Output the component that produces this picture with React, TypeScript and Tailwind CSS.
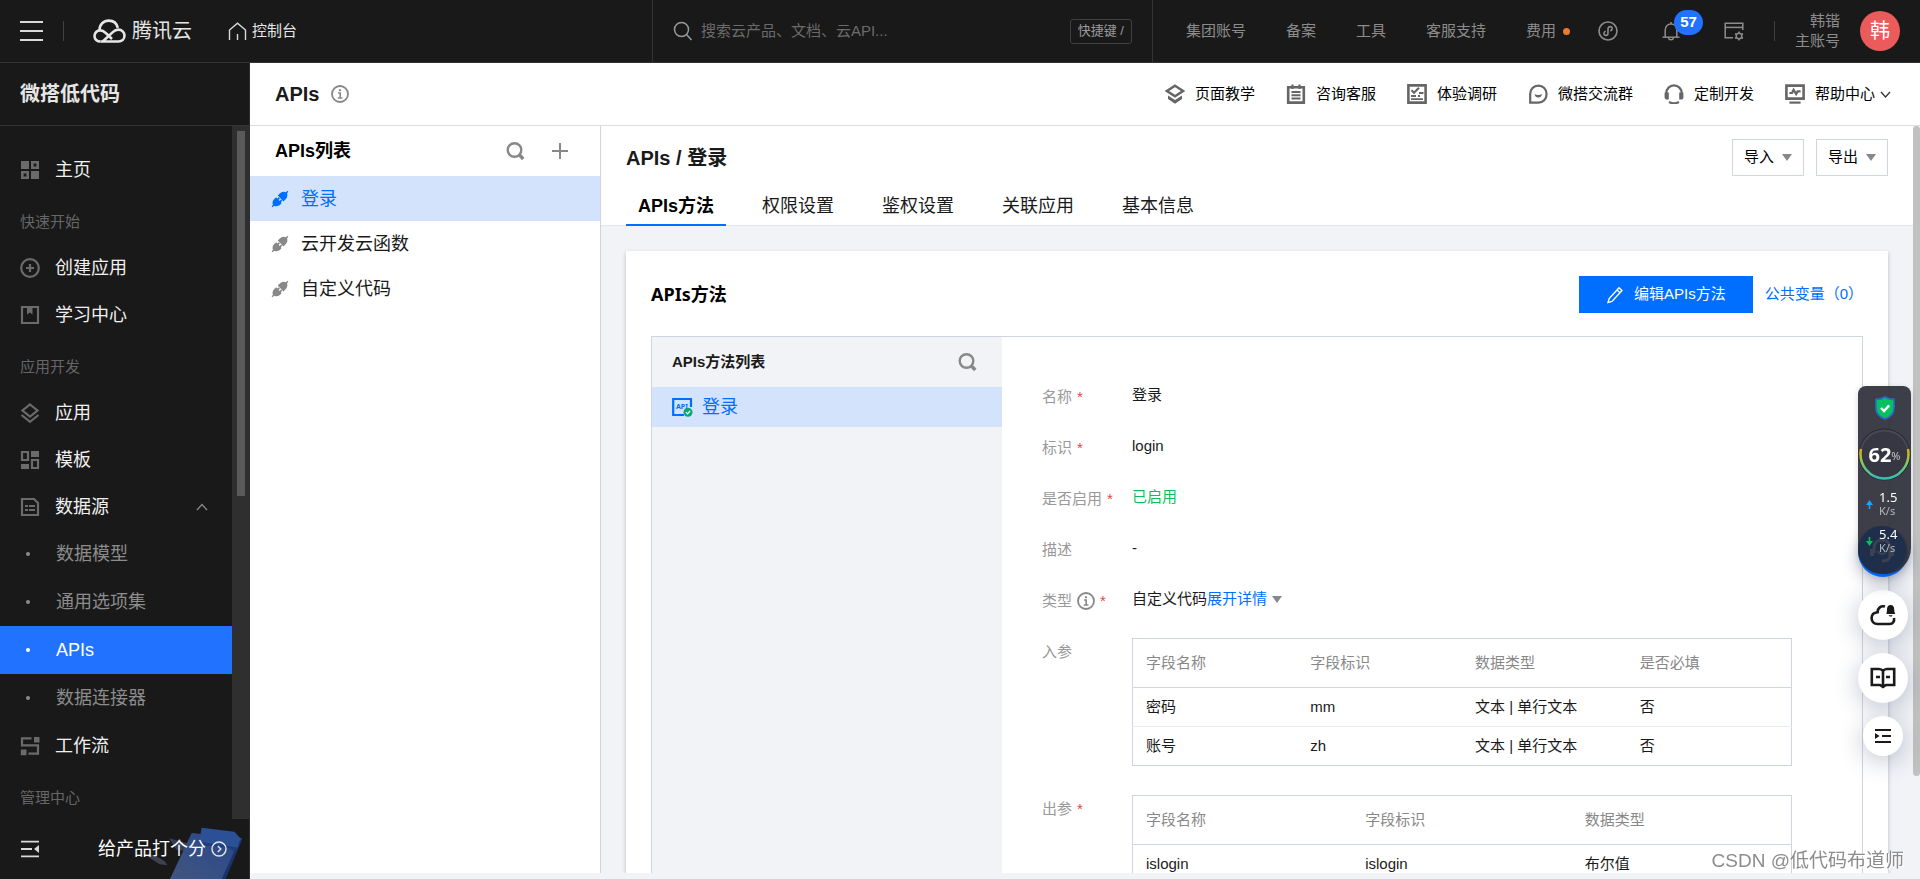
import React from 'react';
import { clsx } from 'clsx';

type IconProps = { className?: string };

/* ---------- icons ---------- */

function Svg({ size = 20, box = 20, className, children }: { size?: number; box?: number; className?: string; children: React.ReactNode }) {
  return (
    <svg width={size} height={size} viewBox={`0 0 ${box} ${box}`} fill="none" stroke="currentColor" strokeWidth="2.2" className={clsx('shrink-0', className)} aria-hidden="true">
      {children}
    </svg>
  );
}

const CloudLogo = () => (
  <svg width="33" height="25" viewBox="0 0 33 25" fill="none" stroke="#e6e6e6" strokeWidth="2.6" aria-hidden="true">
    <path d="M7.5 22.5 C4 22.5 1.5 20.2 1.5 17 C1.5 13.8 4 11.4 7.2 11.4 C9.6 11.4 11 12.4 13 14.2 L19 20" />
    <path d="M6.6 11 C6.4 5.6 10.6 1.6 15.8 1.6 C20.4 1.6 23.8 4.6 24.8 8.9" />
    <path d="M7.5 22.5 H25.5 C29 22.5 31.5 20 31.5 16.6 C31.5 13.2 28.8 10.6 25.4 10.6 C23 10.6 21.4 11.6 19.8 13.1 L10 22.3" />
  </svg>
);

const HomeOutline = () => (
  <Svg size={19} box={19} className="text-[#d9d9d9]">
    <g strokeWidth="1.4"><path d="M1.5 18 V8 L9.5 1.2 L17.5 8 V18" /><path d="M9.5 18 V12" /></g>
  </Svg>
);

const ThinSearch = () => (
  <Svg size={20} className="text-[#9a9a9a]">
    <g strokeWidth="1.5"><circle cx="8.5" cy="8.5" r="7" /><path d="M13.5 13.5 L18.5 19" /></g>
  </Svg>
);

const BoldSearch = () => (
  <Svg size={20} className="text-[#888]">
    <circle cx="9.5" cy="9" r="6.8" strokeWidth="2.4" /><path d="M14 13.5 L18.3 18" strokeWidth="3.4" />
  </Svg>
);

const Plus = () => <Svg size={18} box={18} className="text-[#888]"><path d="M9 1 V17 M1 9 H17" strokeWidth="2" /></Svg>;

const Info = ({ className }: IconProps) => (
  <Svg size={18} box={18} className={className}>
    <circle cx="9" cy="9" r="8" strokeWidth="1.8" />
    <path d="M9 4.3 V6.2" /><path d="M7 8 H9.2 V13 M6.8 13 H11.4" strokeWidth="1.6" />
  </Svg>
);

const MiniApp = () => (
  <Svg className="text-[#8c8c8c]">
    <g strokeWidth="1.6">
      <circle cx="10" cy="10" r="9" />
      <path d="M7.8 10.2 C5.6 10.6 5 14.4 7.8 14.4 C9.4 14.4 10 13.4 10 12 V8 C10 6.6 10.8 5.6 12.2 5.6 C15 5.6 14.6 9.4 12.2 9.8" />
    </g>
  </Svg>
);

const Bell = () => (
  <Svg className="text-[#8c8c8c]">
    <g strokeWidth="1.5">
      <path d="M10 1 V3" /><path d="M4.2 16 V9 C4.2 5.4 6.6 3 10 3 C13.4 3 15.8 5.4 15.8 9 V16" />
      <path d="M1.5 16.2 H18.5" /><path d="M7.5 17 C8 19.4 12 19.4 12.5 17" />
    </g>
  </Svg>
);

const WindowGear = () => (
  <Svg className="text-[#8c8c8c]">
    <g strokeWidth="1.5">
      <path d="M9 16.8 H1.2 V2.2 H18.8 V9" /><path d="M1 6.4 H19" />
      <circle cx="15" cy="15" r="2.8" />
      <path d="M15 10.4 V12 M15 18 V19.6 M11 12.7 L12.5 13.5 M17.5 16.5 L19 17.3 M11 17.3 L12.5 16.5 M17.5 13.5 L19 12.7" />
    </g>
  </Svg>
);

const PlugIcon = ({ className }: IconProps) => (
  <Svg size={18} box={18} className={className}>
    <g fill="currentColor" stroke="none">
      <path d="M3 15.8 L1.6 17.2 L0.6 16.2 L2 14.8 C1 12.6 1.6 10.4 3.8 8.4 L5.2 7.2 L6.4 8.6 L7.8 7.2 L9 8.4 L7.6 9.8 L8.6 10.9 L10 9.6 L11.2 10.8 L9.8 12.2 L10.6 13 C8.6 15.8 5.8 17.2 3 15.8 Z" />
      <path d="M15 2.2 L16.4 0.8 L17.4 1.8 L16 3.2 C17 5.6 16.2 8.4 12.4 11.4 L6.8 5.6 C9.4 2 12.4 0.9 15 2.2 Z" />
    </g>
  </Svg>
);

const IcoHome = () => (
  <Svg><g strokeWidth="2.6"><path d="M1 1 H9 V9 H1 Z M11 11 H19 V19 H11 Z" fill="currentColor" stroke="none" /><path d="M12.3 2.3 H17.7 V7.7 H12.3 Z M2.3 12.3 H7.7 V17.7 H2.3 Z" /></g></Svg>
);
const IcoCreate = () => <Svg><circle cx="10" cy="10" r="8.8" /><path d="M10 6 V14 M6 10 H14" /></Svg>;
const IcoLearn = () => (
  <Svg><path d="M2 2 H18 V18 H2 Z" /><path d="M7 3 H12.5 V9.6 L9.8 7.4 L7 9.6 Z" fill="currentColor" stroke="none" /></Svg>
);
const IcoApp = () => <Svg><path d="M10 1.5 L17.5 7.5 L10 13.5 L2.5 7.5 Z" /><path d="M1.5 12 L10 18.8 L18.5 12" /></Svg>;
const IcoTemplate = () => (
  <Svg><path d="M2 2 H8 V10 H2 Z M12 10 H18 V18 H12 Z" /><path d="M11 1 H19 V7 H11 Z M1 14 H9 V19 H1 Z" fill="currentColor" stroke="none" /></Svg>
);
const IcoData = () => (
  <Svg><path d="M2 2 H14 L18 6 V18 H2 Z" /><path d="M5 9 H8 M9 9 H15 M5 13 H8 M9 13 H15" /></Svg>
);
const IcoFlow = () => (
  <Svg><path d="M11.5 2.4 H2 V9.4 H18 V17.6 H8.5" /><path d="M14 1 H19.5 V6.5 H14 Z M0.8 13.6 H6.5 V19.2 H0.8 Z" fill="currentColor" stroke="none" /></Svg>
);

const IcoLayers = () => (
  <Svg><path d="M10 1.8 L18 7 L10 12.2 L2 7 Z" strokeWidth="2.4" /><path d="M3 11.5 L10 16 L17 11.5 V15 L10 19.8 L3 15 Z" fill="currentColor" stroke="none" /></Svg>
);
const IcoNote = () => (
  <Svg><path d="M2.2 3.2 H17.8 V18.6 H2.2 Z" strokeWidth="2.6" /><path d="M6.5 0.5 V5 M13.5 0.5 V5" /><path d="M5.5 8 H14.5 M5.5 11.2 H14.5 M5.5 14.6 H14.5" strokeWidth="2" /></Svg>
);
const IcoSurvey = () => (
  <Svg><path d="M1.4 1.4 H18.6 V18.6 H1.4 Z" strokeWidth="2.6" /><path d="M4.5 6.2 L7 8.8 L12 3.8" strokeWidth="2.2" /><path d="M12 9 H16.5 M4 12 H9 M11 12 H13 M4 15.2 H16" strokeWidth="1.8" /></Svg>
);
const IcoChat = () => (
  <Svg><path d="M2.2 18.6 V10 C2.2 5.2 5.6 1.6 10.4 1.6 C15 1.6 18.6 5.2 18.6 10 C18.6 15 15 18.6 10.4 18.6 Z" /><path d="M6.6 10 C8.4 11.2 12 11.2 14 10 C13.6 12.4 12.4 13.6 10.3 13.6 C8.2 13.6 7 12.4 6.6 10 Z" fill="currentColor" stroke="none" /></Svg>
);
const IcoHeadset = () => (
  <Svg><path d="M2.4 14 V9 C2.4 4.8 5.6 1.4 10 1.4 C14.4 1.4 17.6 4.8 17.6 9 V14" /><path d="M0.6 8.4 H4.8 V15.4 H1.8 L0.6 14 Z M19.4 8.4 H15.2 V15.4 H18.2 L19.4 14 Z" fill="currentColor" stroke="none" /><path d="M5 18 C8 19.6 12 19.6 15 18" /></Svg>
);
const IcoMonitor = () => (
  <Svg><path d="M1.4 1.6 H18.6 V14.6 H1.4 Z" strokeWidth="2.6" /><path d="M4.4 9 H7 L8.6 5.8 L11.2 10 L12.6 7.4 H15.6" /><path d="M4.4 18.6 H15.6" /></Svg>
);

const Pencil = () => (
  <Svg size={18} box={18}><g strokeWidth="1.4"><path d="M2 16.4 L3.2 12.6 L13 1.8 L16 4.6 L6 15.4 Z" /><path d="M11 4 L14 6.8" /></g></Svg>
);

const ApiBadge = () => (
  <svg width="21" height="20" viewBox="0 0 21 20" fill="none" aria-hidden="true">
    <path d="M12 18 H1.2 V2 H19 V10" stroke="#006eff" strokeWidth="2.2" />
    <text x="4" y="12" fontSize="7" fontWeight="700" fill="#006eff" fontFamily="Noto Sans, sans-serif">API</text>
    <circle cx="16" cy="15.2" r="4.5" fill="#0aa870" />
    <path d="M13.9 15.2 L15.5 16.8 L18.2 13.8" stroke="#fff" strokeWidth="1.2" />
  </svg>
);

const Caret = () => <svg width="10" height="7" viewBox="0 0 10 7" aria-hidden="true"><path d="M0 0 H10 L5 7 Z" fill="#888" /></svg>;

/* ---------- top bar ---------- */

function TopBar() {
  return (
    <header className="flex h-[63px] shrink-0 border-b border-[#333] bg-[#191919] text-[15px] text-[#8c8c8c]">
      <div className="flex flex-1 items-center pl-5">
        <button aria-label="菜单" className="flex w-[23px] flex-col gap-[7px]">
          <span className="h-[2px] bg-[#d9d9d9]" />
          <span className="h-[2px] bg-[#d9d9d9]" />
          <span className="h-[2px] bg-[#d9d9d9]" />
        </button>
        <span className="ml-5 h-5 w-px bg-[#404040]" />
        <a href="#" className="ml-[29px] flex items-center gap-[6px] text-xl text-[#e6e6e6]"><CloudLogo />腾讯云</a>
        <a href="#" className="ml-9 flex items-center gap-[5px] text-[#e6e6e6]"><HomeOutline />控制台</a>
      </div>
      <div className="flex w-[501px] items-center border-x border-[#333] pl-5 pr-5">
        <ThinSearch />
        <input aria-label="搜索" placeholder="搜索云产品、文档、云API..." className="ml-2 min-w-0 flex-1 bg-transparent outline-none placeholder:text-[#6b6b6b]" />
        <span className="flex h-[25px] items-center rounded-[3px] border border-[#404040] px-[7px] text-[13px] text-[#999]">快捷键 /</span>
      </div>
      <div className="flex shrink-0 items-center pl-[33px] pr-5">
        <nav className="flex items-center gap-10">
          <a href="#">集团账号</a>
          <a href="#">备案</a>
          <a href="#">工具</a>
          <a href="#">客服支持</a>
          <a href="#" className="flex items-center gap-[7px]">费用<span className="size-[7px] rounded-full bg-[#ed7b2f]" /></a>
        </nav>
        <div className="ml-7 flex items-center gap-[43px]">
          <button aria-label="小程序"><MiniApp /></button>
          <button aria-label="消息" className="relative">
            <Bell />
            <span className="absolute -top-[11px] left-[13px] flex h-[25px] w-[29px] items-center justify-center rounded-full bg-[#2173ff] text-[15px] font-bold text-white">57</span>
          </button>
          <button aria-label="设置"><WindowGear /></button>
        </div>
        <span className="ml-[30px] h-5 w-px bg-[#404040]" />
        <div className="ml-5 text-right leading-5">
          <div>韩锴</div>
          <div>主账号</div>
        </div>
        <span className="ml-5 flex size-10 items-center justify-center rounded-full bg-[#eb5b5b] text-xl text-white">韩</span>
      </div>
    </header>
  );
}

/* ---------- sidebar ---------- */

function NavItem({ icon, label, open }: { icon: React.ReactNode; label: string; open?: boolean }) {
  return (
    <a href="#" className="flex h-[47px] items-center gap-[15px] px-5 text-lg text-[#f0f0f0]">
      <span className="text-[#6b6b6b]">{icon}</span>
      <span className="flex-1">{label}</span>
      {open && <Svg size={12} box={12} className="mr-1 text-[#888]"><path d="M1 9 L6 3.5 L11 9" strokeWidth="1.3" /></Svg>}
    </a>
  );
}

function SubItem({ label, active }: { label: string; active?: boolean }) {
  return (
    <a href="#" className={clsx('flex h-12 items-center pl-[26px] text-lg', active ? 'bg-[#2173ff] text-white' : 'text-[#8c8c8c]')}>
      <span className="mr-[26px] size-1 rounded-full bg-current" />
      {label}
    </a>
  );
}

const NavSection = ({ label }: { label: string }) => (
  <div className="flex h-[51px] items-center px-5 pt-2 text-[15px] text-[#666]">{label}</div>
);

function Sidebar() {
  return (
    <aside className="flex w-[250px] shrink-0 flex-col border-r border-[#2e2e2e] bg-[#191919]">
      <h2 className="flex h-[63px] shrink-0 items-center border-b border-[#333] px-5 text-xl font-bold text-[#e6e6e6]">微搭低代码</h2>
      <div className="flex min-h-0 flex-1">
        <nav className="flex-1 overflow-hidden pt-5">
          <NavItem icon={<IcoHome />} label="主页" />
          <NavSection label="快速开始" />
          <NavItem icon={<IcoCreate />} label="创建应用" />
          <NavItem icon={<IcoLearn />} label="学习中心" />
          <NavSection label="应用开发" />
          <NavItem icon={<IcoApp />} label="应用" />
          <NavItem icon={<IcoTemplate />} label="模板" />
          <NavItem icon={<IcoData />} label="数据源" open />
          <SubItem label="数据模型" />
          <SubItem label="通用选项集" />
          <SubItem label="APIs" active />
          <SubItem label="数据连接器" />
          <NavItem icon={<IcoFlow />} label="工作流" />
          <NavSection label="管理中心" />
        </nav>
        <div className="w-[17px] bg-[#2f2f2f] pl-[5px] pt-[5px]">
          <div className="h-[53%] w-2 bg-[#5a5a5a]" />
        </div>
      </div>
      <div className="relative flex h-[60px] shrink-0 items-center justify-between pl-5 pr-[22px]">
        <svg className="absolute right-0 bottom-0" width="160" height="60" viewBox="0 12 480 180" aria-hidden="true">
          <defs>
            <linearGradient id="board" x1="0" y1="1" x2="1" y2="0">
              <stop offset="0" stopColor="#43557f" />
              <stop offset="1" stopColor="#24478d" />
            </linearGradient>
          </defs>
          <path d="M240 70 L300 86 L290 108 L262 104 Z" fill="#34405a" />
          <path d="M165 118 L195 120 L226 138 L236 151 L212 148 Z" fill="#3d424e" />
          <path d="M308 54 L460 70 L455 82 L402 192 H243 Z" fill="url(#board)" />
          <path d="M460 70 L455 84 L410 192 H398 L448 82 Z" fill="#1b3468" />
          <path d="M338 38 L436 50 L454 70 L446 98 L330 80 Z" fill="#2b5096" />
          <path d="M330 80 L446 98 L438 112 L420 98 L334 90 Z" fill="#1e3c7a" />
        </svg>
        <button aria-label="收起" className="relative text-[#d9d9d9]">
          <Svg><path d="M1 2.6 H19 M1 10 H12 M1 17.4 H19" strokeWidth="1.8" /><path d="M19 6 V14 L14 10 Z" fill="currentColor" stroke="none" /></Svg>
        </button>
        <a href="#" className="relative flex items-center gap-[5px] text-lg text-white">
          给产品打个分
          <Svg size={16} box={16} className="text-[#e6e6e6]"><g strokeWidth="1.4"><circle cx="8" cy="8" r="7" /><path d="M6.8 5 L9.8 8 L6.8 11" /></g></Svg>
        </a>
      </div>
    </aside>
  );
}

/* ---------- page header ---------- */

const helpLinks = [
  { icon: <IcoLayers />, label: '页面教学' },
  { icon: <IcoNote />, label: '咨询客服' },
  { icon: <IcoSurvey />, label: '体验调研' },
  { icon: <IcoChat />, label: '微搭交流群' },
  { icon: <IcoHeadset />, label: '定制开发' },
  { icon: <IcoMonitor />, label: '帮助中心' },
];

function PageHeader() {
  return (
    <div className="flex h-[63px] shrink-0 items-center justify-between border-b border-[#dcdcdc] bg-white pl-[25px] pr-[45px]">
      <h1 className="flex items-center gap-3 text-xl font-bold text-[#1a1a1a]">APIs <Info className="text-[#888]" /></h1>
      <div className="flex items-center gap-[31px] text-[15px] text-black">
        {helpLinks.map((l) => (
          <a key={l.label} href="#" className="relative flex items-center gap-[10px]">
            <span className="text-[#666]">{l.icon}</span>
            {l.label}
            {l.label === '帮助中心' && (
              <Svg size={11} box={11} className="absolute -right-4 text-[#333]"><path d="M1 3 L5.5 8 L10 3" strokeWidth="1.3" /></Svg>
            )}
          </a>
        ))}
      </div>
    </div>
  );
}

function ApiList() {
  const items = ['登录', '云开发云函数', '自定义代码'];
  return (
    <section className="w-[351px] shrink-0 border-r border-[#cfd5de] bg-white">
      <div className="flex h-[50px] items-center pl-[25px] pr-[31px]">
        <h2 className="flex-1 text-lg font-bold text-black">APIs列表</h2>
        <button aria-label="搜索"><BoldSearch /></button>
        <button aria-label="新建" className="ml-[26px]"><Plus /></button>
      </div>
      {items.map((name, i) => (
        <a key={name} href="#" className={clsx('flex h-[45px] items-center gap-3 pl-[21px] text-lg', i === 0 ? 'bg-[#d4e3fc] text-[#006eff]' : 'text-[#1a1a1a]')}>
          <PlugIcon className={i === 0 ? 'text-[#006eff]' : 'text-[#888]'} />
          {name}
        </a>
      ))}
    </section>
  );
}

/* ---------- detail ---------- */

function FieldTable({ head, rows }: { head: string[]; rows: string[][] }) {
  return (
    <table className="w-full table-fixed border-collapse border border-[#cfd5de] text-left text-[15px] text-[#1a1a1a]">
      <thead>
        <tr className="h-[49px] border-b border-[#cfd5de] text-[#888]">
          {head.map((h) => <th key={h} className="pl-[13px] font-normal">{h}</th>)}
        </tr>
      </thead>
      <tbody>
        {rows.map((r) => (
          <tr key={r[0]} className="h-[39px] border-b border-[#e7eaef] last:border-[#cfd5de]">
            {r.map((c, i) => <td key={i} className="pl-[13px]">{c}</td>)}
          </tr>
        ))}
      </tbody>
    </table>
  );
}

function FormLabel({ children, required }: { children: React.ReactNode; required?: boolean }) {
  return (
    <dt className="flex w-[90px] shrink-0 items-center gap-[5px] pt-[2px] leading-[23px] text-[#999]">
      {children}
      {required && <span className="text-[#e54545]">*</span>}
    </dt>
  );
}

function FormRow({ label, required, children }: { label: React.ReactNode; required?: boolean; children: React.ReactNode }) {
  return (
    <div className="flex h-[51px] items-center">
      <FormLabel required={required}>{label}</FormLabel>
      <dd className="flex items-center text-[#1a1a1a]">{children}</dd>
    </div>
  );
}

function MethodForm() {
  return (
    <dl className="min-w-0 flex-1 bg-white pl-10 pr-[70px] pt-[33px] text-[15px]">
      <FormRow label="名称" required>登录</FormRow>
      <FormRow label="标识" required>login</FormRow>
      <FormRow label="是否启用" required><span className="text-[#0abf5b]">已启用</span></FormRow>
      <FormRow label="描述">-</FormRow>
      <FormRow label={<>类型 <Info className="text-[#888]" /></>} required>
        自定义代码<a href="#" className="text-[#006eff]">展开详情</a><span className="ml-[5px]"><Caret /></span>
      </FormRow>
      <div className="mt-[13px] flex items-start">
        <FormLabel>入参</FormLabel>
        <dd className="flex-1">
          <FieldTable head={['字段名称', '字段标识', '数据类型', '是否必填']} rows={[['密码', 'mm', '文本 | 单行文本', '否'], ['账号', 'zh', '文本 | 单行文本', '否']]} />
        </dd>
      </div>
      <div className="mt-[29px] flex items-start">
        <FormLabel required>出参</FormLabel>
        <dd className="flex-1">
          <FieldTable head={['字段名称', '字段标识', '数据类型']} rows={[['islogin', 'islogin', '布尔值']]} />
        </dd>
      </div>
    </dl>
  );
}

function Detail() {
  const tabs = ['APIs方法', '权限设置', '鉴权设置', '关联应用', '基本信息'];
  return (
    <section className="flex min-w-0 flex-1 flex-col overflow-hidden bg-[#f2f3f7]">
      <div className="flex h-[100px] shrink-0 flex-col justify-between border-b border-[#e3e6eb] bg-white px-[25px] pt-[13px]">
        <div className="flex items-center justify-between">
          <h2 className="text-xl font-bold text-[#1a1a1a]">APIs / 登录</h2>
          <div className="flex gap-3">
            {['导入', '导出'].map((t) => (
              <button key={t} className="flex h-[37px] w-[72px] items-center justify-center gap-2 border border-[#cfd5de] text-[15px] text-black">{t}<Caret /></button>
            ))}
          </div>
        </div>
        <div role="tablist" className="-mb-px flex gap-6 text-lg">
          {tabs.map((t, i) => (
            <button key={t} role="tab" aria-selected={i === 0} className={clsx('h-10 border-b-2 px-3 pt-[2px]', i === 0 ? 'border-[#006eff] font-bold text-black' : 'border-transparent text-[#1a1a1a]')}>{t}</button>
          ))}
        </div>
      </div>
      <div className="mx-[25px] mt-[25px] flex min-h-0 flex-1 flex-col bg-white px-[25px] pt-[25px] shadow-[0_2px_4px_rgba(54,58,80,0.32)]">
        <div className="flex items-center">
          <h3 className="flex-1 font-['Noto_Sans','Noto_Sans_CJK_SC',sans-serif] text-lg leading-[37px] font-bold text-black">APIs方法</h3>
          <button className="flex h-[37px] items-center gap-[10px] bg-[#006eff] px-[27px] text-[15px] text-white"><Pencil />编辑APIs方法</button>
          <a href="#" className="ml-3 text-[15px] text-[#006eff]">公共变量（0）</a>
        </div>
        <div className="mt-[23px] flex min-h-0 flex-1 overflow-hidden border border-b-0 border-[#cfd5de]">
          <div className="w-[350px] shrink-0 bg-[#f2f3f7]">
            <div className="flex h-[50px] items-center justify-between pr-[25px] pl-5">
              <h4 className="text-[15px] font-bold text-[#1a1a1a]">APIs方法列表</h4>
              <button aria-label="搜索"><BoldSearch /></button>
            </div>
            <a href="#" className="flex h-10 items-center gap-[9px] bg-[#d4e3fc] pl-5 text-lg text-[#006eff]"><ApiBadge />登录</a>
          </div>
          <MethodForm />
        </div>
      </div>
    </section>
  );
}

/* ---------- floating widgets ---------- */

function Speed({ value, up }: { value: string; up?: boolean }) {
  return (
    <div className="flex w-full items-center gap-[6px] pl-2">
      <svg width="7" height="9" viewBox="0 0 7 9" className={up ? 'text-[#1aa3ff]' : 'rotate-180 text-[#0abf5b]'} aria-hidden="true">
        <path d="M3.5 0 L7 5 H4.3 V9 H2.7 V5 H0 Z" fill="currentColor" />
      </svg>
      <div className="leading-[13px]">
        <div className="text-[13px] text-white">{value}</div>
        <div className="text-[11px] text-[#b5b6bb]">K/s</div>
      </div>
    </div>
  );
}

function SystemMonitor() {
  return (
    <div className="relative h-[191px] w-[53px] shrink-0 self-start">
      <div className="absolute bottom-0 size-[50px] rounded-full bg-[#006eff] shadow-[0_6px_16px_rgba(55,66,100,0.4)]" />
      <div className="relative flex h-[188px] flex-col items-center rounded-t-lg rounded-b-[26px] bg-[#2e2f3a]/93 pt-[10px] font-['Noto_Sans',sans-serif] shadow-[0_2px_6px_rgba(0,0,0,0.15)]">
        <div className="absolute bottom-0 left-0 flex size-[48px] items-center justify-center rounded-full bg-[#1f2e4a] text-[#3c4150]">
          <Svg size={26} box={26}><path d="M5 16 V11 C5 6 8 3 13 3 C18 3 21 6 21 11 V18 C21 22 19 24 13 24" strokeWidth="3" /><path d="M1 12 H5 V19 H1 Z M21 12 H25 V19 H21 Z" fill="currentColor" stroke="none" /><path d="M9 14 C10 18 16 18 17 14" /></Svg>
        </div>
        <svg width="20" height="24" viewBox="0 0 20 24" className="shrink-0" aria-hidden="true">
          <path d="M10 1 C13 3 16 3.4 19 3.4 V12 C19 17.4 15.4 21 10 23 C4.6 21 1 17.4 1 12 V3.4 C4 3.4 7 3 10 1 Z" fill="#05c160" stroke="#2b6ad0" strokeWidth="1.6" />
          <path d="M6 12 L9 15 L14.2 9.4" fill="none" stroke="#fff" strokeWidth="2.4" />
        </svg>
        <div className="relative mt-2 flex size-[53px] shrink-0 items-center justify-center">
          <svg className="absolute inset-0" width="53" height="53" viewBox="0 0 53 53" fill="none" aria-hidden="true">
            <defs>
              <linearGradient id="ring" x1="0" y1="0" x2="0" y2="1">
                <stop offset="0" stopColor="#d9b310" />
                <stop offset="0.5" stopColor="#7fcb62" />
                <stop offset="1" stopColor="#35bdb5" />
              </linearGradient>
            </defs>
            <circle cx="26.5" cy="26.5" r="26" fill="#272833" />
            <circle cx="26.5" cy="26.5" r="24" fill="#363743" stroke="#474853" strokeWidth="2" />
            <path d="M3 21 C0 37 12 50.5 26.5 50.5 C41 50.5 53 37 50 21" stroke="url(#ring)" strokeWidth="2.5" />
          </svg>
          <span className="relative text-xl font-bold text-white">62</span>
          <span className="relative mt-1 text-[11px] text-[#c4c5ca]">%</span>
        </div>
        <div className="relative mt-[10px] flex w-full flex-col gap-[11px]">
          <Speed value="1.5" up />
          <Speed value="5.4" />
        </div>
      </div>
    </div>
  );
}

function FloatingTools() {
  const round = 'flex items-center justify-center rounded-full bg-white text-[#1a1a1a] shadow-[0_5px_24px_rgba(55,70,110,0.32)]';
  return (
    <div className="fixed top-[386px] right-3 flex w-[50px] flex-col items-center gap-[13px]">
      <SystemMonitor />
      <button aria-label="通知" className={clsx(round, 'size-[50px]')}>
        <Svg size={26} box={26}>
          <path d="M15 4.6 C11 3.4 7.6 6 7.6 10.2 C3.4 10.6 1.6 12.8 1.6 16 C1.6 19.6 4 22 7.6 22 H19.6 C23 22 24.6 19.4 24 16" strokeWidth="2.6" />
          <path d="M16.4 12 C16.6 10.6 17 9.6 17 7.4 C17 4.6 18.2 3 20.6 3 C23 3 24.2 4.6 24.2 7.4 C24.2 9.6 24.8 10.6 25.2 12 Z M18.6 13.2 H22.6 C22 15 19.2 15 18.6 13.2 Z" fill="currentColor" stroke="none" />
        </Svg>
      </button>
      <button aria-label="文档" className={clsx(round, 'size-[50px]')}>
        <Svg size={26} box={26}>
          <path d="M13 6 C12 4.6 11 4 9 4 H1.8 V20 H10 L13 22 L16 20 H24.2 V4 H17 C15 4 14 4.6 13 6 V21" strokeWidth="2.6" />
          <path d="M6 12 H10 M16 12 H20" strokeWidth="2.4" />
        </Svg>
      </button>
      <button aria-label="收起工具" className={clsx(round, 'size-10')}>
        <Svg size={18} box={18}><path d="M1 3 H17 M8 9 H17 M1 15 H17" /><path d="M1 6 L5.6 9 L1 12 Z" fill="currentColor" stroke="none" /></Svg>
      </button>
    </div>
  );
}

export default function App() {
  return (
    <div className="flex h-screen flex-col overflow-hidden bg-[#f2f3f7] font-['Liberation_Sans','Noto_Sans_CJK_SC',sans-serif]">
      <TopBar />
      <div className="flex min-h-0 flex-1">
        <Sidebar />
        <main className="flex min-w-0 flex-1 flex-col">
          <PageHeader />
          <div className="flex min-h-0 flex-1 pb-[6px]">
            <ApiList />
            <Detail />
            <div className="w-[7px] shrink-0 bg-[#f2f3f7]">
              <div className="h-[87%] rounded-full bg-[#c1c1c1]" />
            </div>
          </div>
        </main>
      </div>
      <FloatingTools />
      <div className="pointer-events-none fixed right-4 bottom-1 text-[19px] leading-7 text-[#8c8c8c] [text-shadow:1px_1px_0_#fff]">CSDN @低代码布道师</div>
    </div>
  );
}
